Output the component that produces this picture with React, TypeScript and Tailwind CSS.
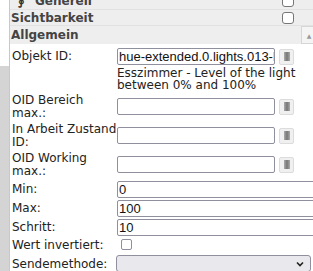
import { FC } from "react"

const PickButton: FC = () => (
  <button className="ml-[4px] w-[15px] h-[16px] flex items-center justify-center bg-[#f0f0f0] border border-[#dcdcdc] rounded-[2px]">
    <span className="w-[6px] h-[9px] bg-gradient-to-r from-[#aaa] via-[#777] to-[#aaa]" />
  </button>
)

const Field: FC<{ value?: string; pick?: boolean }> = ({ value = "", pick }) => (
  <div className="flex items-center">
    <div
      className={`${pick ? "w-[158px]" : "w-[200px]"} h-[17px] border border-[#8f8f9d] rounded-[2px] pl-[1px] font-['Liberation_Sans',Arial,sans-serif] text-[13px] leading-[15px] text-[#111] whitespace-nowrap overflow-hidden`}
    >
      {value}
    </div>
    {pick && <PickButton />}
  </div>
)

// single-line label, field next to it
const Row: FC<{ label: string; value?: string; pick?: boolean; h: string }> = ({ label, value, pick, h }) => (
  <div className={`flex ${h} items-start`}>
    <div className="w-[107px] shrink-0 pl-[2px] h-[17px] leading-[17px]">{label}</div>
    <Field value={value} pick={pick} />
  </div>
)

// two-line label, field a bit lower
const TallRow: FC<{ label: string }> = ({ label }) => (
  <div className="flex h-[29px] items-start">
    <div className="w-[107px] shrink-0 pl-[2px] leading-[13px]">{label}</div>
    <div className="pt-[4px]">
      <Field pick />
    </div>
  </div>
)

export default function App() {
  return (
    <div className="w-[313px] h-[271px] overflow-hidden bg-white flex font-['DejaVu_Sans',Verdana,sans-serif] text-[12px] text-[#222]">
      <div className="w-[10px] shrink-0 flex flex-col">
        <div className="h-[66px] border-r border-[#c8c8c8]" />
        <div className="flex-1 bg-[#d4d4d4] border-r border-[#c8c8c8]" />
      </div>
      <div className="flex-1 flex flex-col -mt-[7px]">
        <div className="h-[17px] bg-[#eeeeee] border-b border-[#e2e2e2] flex items-center pl-[8px] font-bold text-[#444]">
          <span className="w-[17px] text-[#333]">∮</span>
          <span>Generell</span>
          <span className="ml-auto mr-[23px] w-[12px] h-[12px] border border-[#777] rounded-[3px] bg-white" />
        </div>
        <div className="h-[16px] bg-[#eeeeee] border-b border-[#e2e2e2] flex items-center pl-[1px] font-bold text-[#444]">
          <span>Sichtbarkeit</span>
          <span className="ml-auto mr-[23px] w-[12px] h-[12px] border border-[#777] rounded-[3px] bg-white" />
        </div>
        <div className="h-[18px] bg-[#eeeeee] flex items-center pl-[1px] font-bold text-[#444]">
          <span>Allgemein</span>
          <span className="ml-auto h-[18px] w-[16px] bg-[#f4f4f4] border border-[#d6d6d6] flex items-center justify-center text-[6px] text-[#999]">
            ▲
          </span>
        </div>
        <div className="pt-[4px] flex flex-col">
          <Row label="Objekt ID:" value="hue-extended.0.lights.013-level" pick h="h-[18px]" />
          <div className="pl-[107px] leading-[12px] pt-[1px] pb-[3px]">
            Esszimmer - Level of the light
            <br />
            between 0% and 100%
          </div>
          <TallRow label="OID Bereich max.:" />
          <TallRow label="In Arbeit Zustand ID:" />
          <TallRow label="OID Working max.:" />
          <Row label="Min:" value="0" h="h-[19px]" />
          <Row label="Max:" value="100" h="h-[19px]" />
          <Row label="Schritt:" value="10" h="h-[19px]" />
          <div className="flex h-[17px] items-start">
            <div className="w-[111px] shrink-0 pl-[2px] leading-[14px]">Wert invertiert:</div>
            <span className="mt-[1px] w-[11px] h-[11px] border border-[#8f8f9d] rounded-[2px]" />
          </div>
          <div className="flex h-[17px] items-center">
            <div className="w-[106px] shrink-0 pl-[2px]">Sendemethode:</div>
            <div className="w-[195px] h-[17px] border border-[#8f8f9d] rounded-[3px] bg-[#e9e9ed] flex items-center justify-end pr-[6px]">
              <svg width="8" height="6" viewBox="0 0 8 6">
                <path d="M1 1.5 L4 4.5 L7 1.5" stroke="#222" strokeWidth="1.6" fill="none" />
              </svg>
            </div>
          </div>
        </div>
      </div>
    </div>
  )
}
